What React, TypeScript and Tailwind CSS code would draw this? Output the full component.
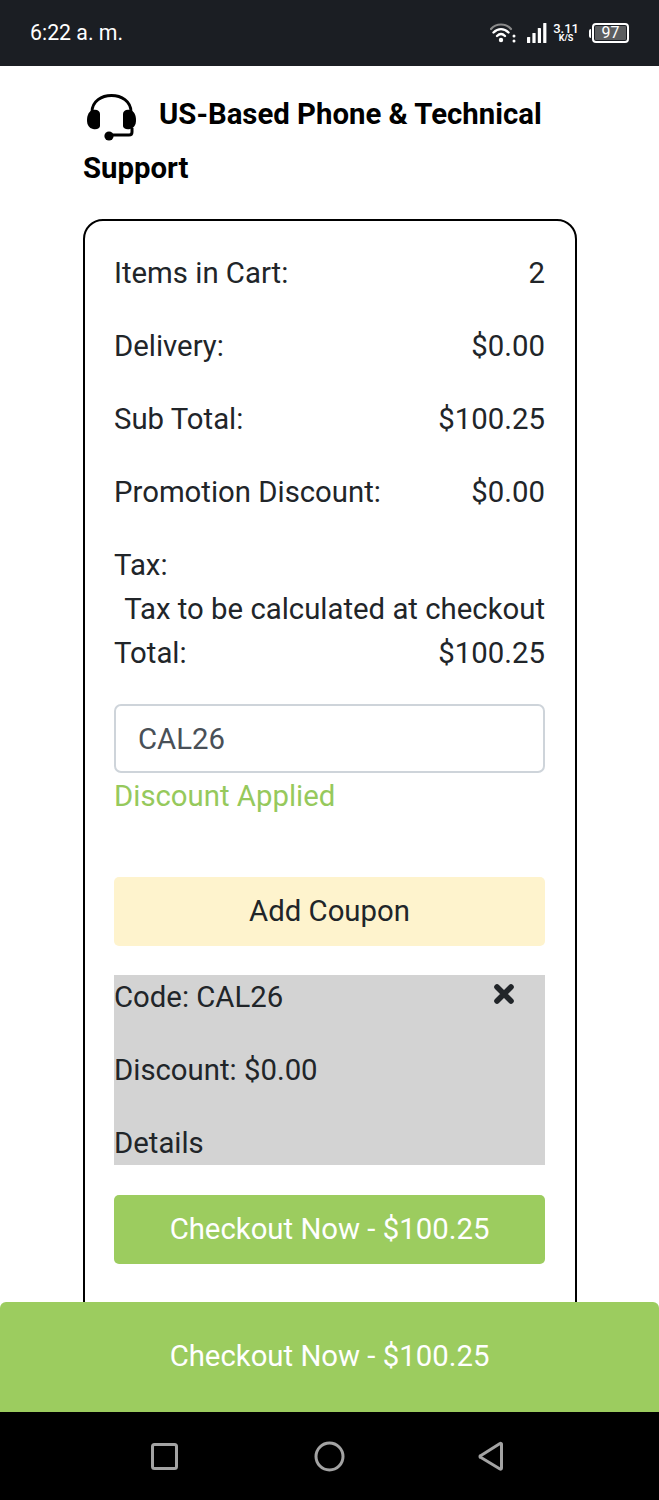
import React from "react";

function Row({ label, value, className = "mb-[29px]" }: { label: string; value: string; className?: string }) {
  return (
    <div className={`flex justify-between h-[44px] leading-[44px] ${className}`}>
      <span>{label}</span>
      <span>{value}</span>
    </div>
  );
}

function Wifi() {
  return (
    <svg width="26" height="22" viewBox="0 0 26 22" fill="none" className="block">
      <path d="M1 7 C6 1 16 1 21 7" stroke="#8a8a8a" strokeWidth="2.2" strokeLinecap="round" />
      <path d="M3.5 10.5 C8 6 14 6 18.5 10.5" stroke="#fff" strokeWidth="2.4" strokeLinecap="round" />
      <path d="M7 14 C9.5 11.6 12.5 11.6 15 14" stroke="#fff" strokeWidth="2.4" strokeLinecap="round" />
      <circle cx="11" cy="18" r="2.2" fill="#fff" />
      <circle cx="24" cy="14" r="1.5" fill="#fff" />
      <circle cx="24" cy="19" r="1.5" fill="#fff" />
    </svg>
  );
}

function Signal() {
  return (
    <svg width="20" height="20" viewBox="0 0 20 20" className="block" fill="#fff">
      <rect x="0" y="14" width="3.2" height="6" rx="0.6" />
      <rect x="5.4" y="10" width="3.2" height="10" rx="0.6" />
      <rect x="10.8" y="5" width="3.2" height="15" rx="0.6" />
      <rect x="16.2" y="0" width="3.2" height="20" rx="0.6" />
    </svg>
  );
}

function Headset() {
  return (
    <svg width="54" height="50" viewBox="0 0 54 50" className="block" fill="none">
      <path d="M9 22 V19 C9 -3 48 -3 48 19 V22" stroke="#000" strokeWidth="3" />
      <path d="M10 17 C6 18 4 22 4 27 C4 32 6 35 10 36 C14 37 17 35 17 33 V21 C17 18 14 16 10 17 Z" fill="#000" />
      <path d="M47 17 C51 18 53 22 53 27 C53 32 51 35 47 36 C43 37 40 35 40 33 V21 C40 18 43 16 47 17 Z" fill="#000" />
      <path d="M49 35 V39 C49 41 48 42 46 42 H26" stroke="#000" strokeWidth="3" />
      <circle cx="26" cy="43" r="4.6" fill="#000" />
    </svg>
  );
}

export default function App() {
  return (
    <div className="w-[659px] h-[1500px] flex flex-col overflow-hidden bg-white font-['Roboto',sans-serif] text-[#212529] text-[29.33px]">
      <div className="h-[66px] shrink-0 bg-[#1b1e23] flex items-center justify-between pl-[30px] pr-[30px] text-white">
        <span className="text-[21.3px] leading-none">6:22 a. m.</span>
        <div className="flex items-center">
          <Wifi />
          <div className="ml-[11px]"><Signal /></div>
          <div className="ml-[6px] flex flex-col items-center text-white font-medium leading-none">
            <span className="text-[13px] leading-[11px]">3.11</span>
            <span className="text-[9px] leading-[9px] font-bold">K/S</span>
          </div>
          <div className="ml-[10px] w-[2px] h-[9px] bg-white rounded-l-sm" />
          <div className="ml-px w-[37px] h-[20px] border-2 border-white rounded-[4px] p-px flex">
            <div className="flex-1 bg-[#5c5e60] rounded-[1px] flex items-center justify-center text-[16px] leading-none text-white">97</div>
          </div>
        </div>
      </div>

      <div className="flex-1 min-h-0 relative overflow-hidden">
        <div className="pl-[83px] pr-[82px] pt-[21px]">
          <h2 className="font-bold text-black text-[29.33px] leading-[54px] m-0">
            <span className="inline-block align-middle h-[40px] mr-[22px]"><span className="block -mt-[3px]"><Headset /></span></span>
            US-Based Phone &amp; Technical Support
          </h2>
          <div className="mt-[24px] border-2 border-black rounded-[20px] pl-[29px] pr-[30px] pt-[10px] pb-[60px] h-[1200px]">
            <div className="pt-[20px]">
              <Row label="Items in Cart:" value="2" />
              <Row label="Delivery:" value="$0.00" />
              <Row label="Sub Total:" value="$100.25" />
              <Row label="Promotion Discount:" value="$0.00" />
              <div className="h-[44px] leading-[44px]">Tax:</div>
              <div className="h-[44px] leading-[44px] text-right">Tax to be calculated at checkout</div>
              <Row label="Total:" value="$100.25" className="" />
            </div>
            <input
              readOnly
              value="CAL26"
              className="mt-[29px] block w-full h-[69px] border-2 border-[#ced4da] rounded-[7px] px-[22px] text-[#495057] outline-none"
            />
            <div className="h-[44px] leading-[44px] text-[#96c95c] mt-px">Discount Applied</div>
            <button className="mt-[59px] block w-full h-[69px] rounded-[5px] bg-[#fef3cd] text-[#212529]">Add Coupon</button>
            <div className="mt-[29px] h-[190px] bg-[#d3d3d3] relative">
              <div className="h-[44px] leading-[44px] mb-[29px]">Code: CAL26</div>
              <div className="h-[44px] leading-[44px] mb-[29px]">Discount: $0.00</div>
              <div className="h-[44px] leading-[44px]">Details</div>
              <svg width="22" height="22" viewBox="0 0 22 22" className="absolute right-[30px] top-[8px]">
                <path d="M4 4 L18 18 M18 4 L4 18" stroke="#212529" strokeWidth="5.6" strokeLinecap="round" />
              </svg>
            </div>
            <button className="mt-[30px] block w-full h-[69px] rounded-[5px] bg-[#9ccc5f] text-white">Checkout Now - $100.25</button>
          </div>
        </div>
        <button className="absolute left-0 right-0 bottom-0 h-[110px] pb-[1px] rounded-t-[6px] bg-[#9ccc5f] text-white">Checkout Now - $100.25</button>
      </div>

      <div className="h-[88px] shrink-0 bg-black flex items-center">
        <svg width="659" height="88" viewBox="0 0 659 88" fill="none" stroke="#a3a3a3" strokeWidth="3" className="block">
          <rect x="152.5" y="32.5" width="24" height="24" rx="2" />
          <circle cx="329.5" cy="44.5" r="13.5" />
          <path d="M501.5 32 V56 a1 1 0 0 1 -1.5 1 L481 45.5 a1 1 0 0 1 0 -2 L500 31.5 a1 1 0 0 1 1.5 0.5 Z" strokeLinejoin="round" />
        </svg>
      </div>
    </div>
  );
}
